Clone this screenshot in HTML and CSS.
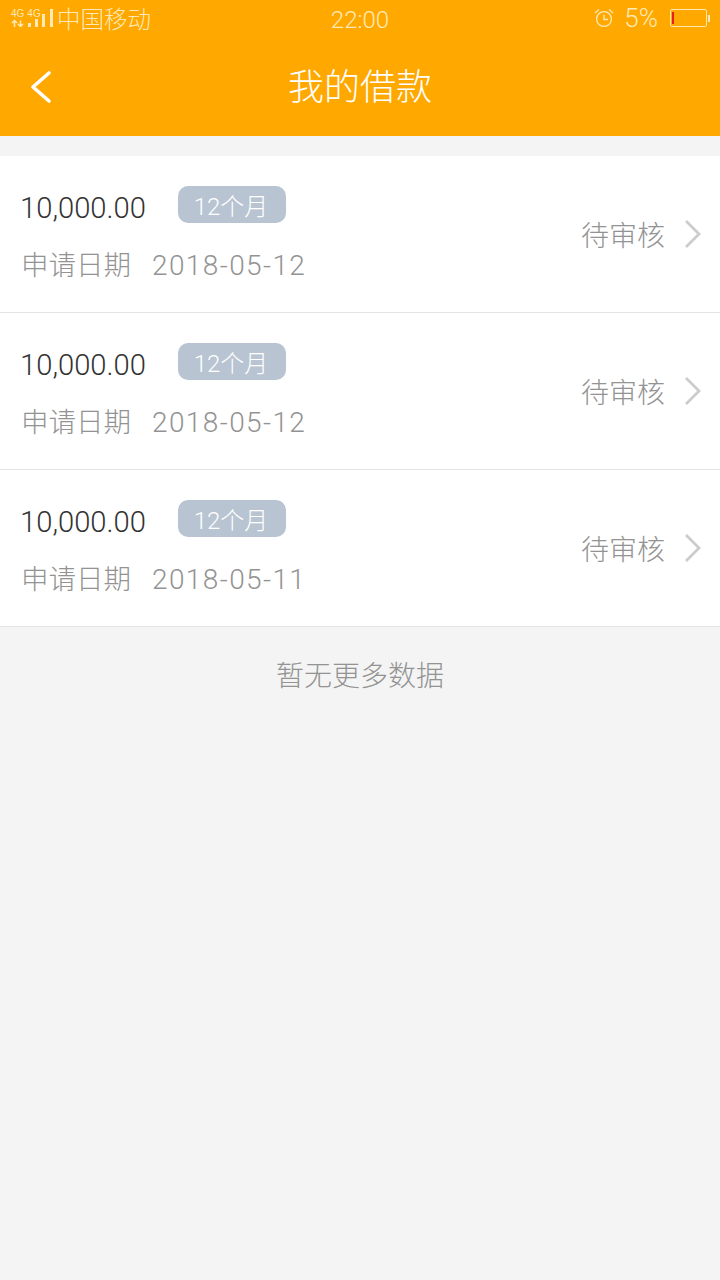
FILE: index.html
```html
<!DOCTYPE html>
<html lang="zh-CN">

<head>
    <meta charset="UTF-8">
    <meta name="viewport" content="width=device-width, initial-scale=1.0">
    <title>我的借款</title>
    <link rel="stylesheet" href="styles.css">
</head>

<body>
    <div class="top">
        <div class="status">
            <div class="status-left">
                <div class="net">
                    <div class="net-text"><span>4G</span><span>4G</span></div>
                    <svg class="signal" width="43" height="10" viewBox="0 0 43 10">
                        <path d="M3.500 10V4M1 6l2.500-2.500L6 6M9.500 3.500v6M7 7l2.500 2.500L12 7" fill="none" stroke="#ffe9b8" stroke-width="1.500"/>
                        <rect x="17" y="6" width="3" height="4" fill="#ffe9b8"/>
                        <rect x="24" y="2" width="3" height="8" fill="#ffe9b8"/>
                        <rect x="31" y="0" width="3" height="10" fill="#ffe9b8"/>
                        <rect x="39" y="0" width="3" height="10" fill="#ffe9b8"/>
                    </svg>
                    <svg class="signal-top" width="12" height="18" viewBox="0 0 12 18">
                        <rect x="1" y="5" width="3" height="13" fill="#ffe9b8"/>
                        <rect x="9" y="0" width="3" height="18" fill="#ffe9b8"/>
                    </svg>
                </div>
                <span class="carrier">中国移动</span>
            </div>
            <span class="clock">22:00</span>
            <div class="status-right">
                <svg class="alarm" width="20" height="20" viewBox="0 0 20 20">
                    <circle cx="10" cy="11" r="7.400" fill="none" stroke="#ffe9b8" stroke-width="1.300"/>
                    <path d="M10 6.500V11.500H14M1 5l4-3.500M19 5l-4-3.500" fill="none" stroke="#ffe9b8" stroke-width="1.300"/>
                </svg>
                <span class="percent">5%</span>
                <div class="battery">
                    <div class="battery-body"><div class="battery-level"></div></div>
                    <div class="battery-tip"></div>
                </div>
            </div>
        </div>
        <div class="title-bar">
            <svg class="back" width="24" height="34" viewBox="0 0 24 34">
                <path d="M20 3L4 17l16 14" fill="none" stroke="#fff" stroke-width="3.600" stroke-linecap="round" stroke-linejoin="round"/>
            </svg>
            <h1 class="title">我的借款</h1>
        </div>
    </div>

    <div class="list">
        <div class="row">
            <div class="info">
                <div class="line">
                    <span class="amount">10,000.00</span>
                    <span class="tag">12个月</span>
                </div>
                <div class="date"><span class="date-label">申请日期</span><span class="date-num">2018-05-12</span></div>
            </div>
            <div class="state">
                <span>待审核</span>
                <svg class="arrow" width="18" height="30" viewBox="0 0 18 30">
                    <path d="M2 2l13 13L2 28" fill="none" stroke="#cccccc" stroke-width="2.800"/>
                </svg>
            </div>
        </div>
        <div class="row">
            <div class="info">
                <div class="line">
                    <span class="amount">10,000.00</span>
                    <span class="tag">12个月</span>
                </div>
                <div class="date"><span class="date-label">申请日期</span><span class="date-num">2018-05-12</span></div>
            </div>
            <div class="state">
                <span>待审核</span>
                <svg class="arrow" width="18" height="30" viewBox="0 0 18 30">
                    <path d="M2 2l13 13L2 28" fill="none" stroke="#cccccc" stroke-width="2.800"/>
                </svg>
            </div>
        </div>
        <div class="row">
            <div class="info">
                <div class="line">
                    <span class="amount">10,000.00</span>
                    <span class="tag">12个月</span>
                </div>
                <div class="date"><span class="date-label">申请日期</span><span class="date-num">2018-05-11</span></div>
            </div>
            <div class="state">
                <span>待审核</span>
                <svg class="arrow" width="18" height="30" viewBox="0 0 18 30">
                    <path d="M2 2l13 13L2 28" fill="none" stroke="#cccccc" stroke-width="2.800"/>
                </svg>
            </div>
        </div>
    </div>
    <p class="no-more">暂无更多数据</p>
</body>

</html>
```

FILE: styles.css
```css
* {
    margin: 0;
    padding: 0;
    box-sizing: border-box;
}

body {
    width: 720px;
    height: 1280px;
    overflow: hidden;
    background-color: #f4f4f4;
    font-family: Roboto, "Noto Sans CJK SC", sans-serif;
    font-weight: 300;
}

.top {
    height: 136px;
    background-color: #ffa800;
}

.status {
    height: 40px;
    padding: 0 10px 0 11px;
    display: flex;
    justify-content: space-between;
    align-items: center;
    position: relative;
    color: #ffe9b8;
}

.status-left,
.status-right {
    display: flex;
    align-items: center;
}

.net {
    width: 43px;
    height: 18px;
    margin-bottom: 4px;
    position: relative;
}

.net-text {
    display: flex;
    gap: 3px;
    font-family: "Liberation Sans", sans-serif;
    font-size: 10px;
    font-weight: 400;
    line-height: 10px;
}

.signal {
    position: absolute;
    left: 0;
    top: 8px;
}

.signal-top {
    position: absolute;
    left: 30px;
    top: 0;
}

.carrier {
    margin-left: 3px;
    font-size: 23.500px;
    line-height: 30px;
}

.clock {
    position: absolute;
    left: 0;
    right: 0;
    text-align: center;
    font-size: 24px;
    line-height: 30px;
}

.status-right {
    gap: 10px;
}

.alarm {
    margin-bottom: 4px;
}

.percent {
    margin-bottom: 4px;
    font-size: 26px;
    line-height: 30px;
}

.battery {
    display: flex;
    align-items: center;
    margin-left: 2px;
    margin-bottom: 4px;
}

.battery-body {
    width: 37px;
    height: 18px;
    border: 1.500px solid #ffe9b8;
    border-radius: 2px;
    padding: 2px 0 2px 1px;
}

.battery-level {
    width: 2px;
    height: 100%;
    background-color: #e8201c;
}

.battery-tip {
    width: 2px;
    height: 7px;
    margin-left: 1px;
    background-color: #ffe9b8;
}

.title-bar {
    height: 96px;
    position: relative;
    display: flex;
    justify-content: center;
    align-items: center;
}

.back {
    position: absolute;
    left: 29px;
    top: 30px;
}

.title {
    color: #fff;
    font-size: 36px;
    font-weight: 300;
    line-height: 50px;
}

.list {
    margin-top: 20px;
    background-color: #fff;
}

.row {
    height: 157px;
    padding: 0 18px 0 20px;
    display: flex;
    justify-content: space-between;
    align-items: center;
    border-bottom: 1px solid #e4e4e4;
}

.info {
    height: 97px;
}

.line {
    display: flex;
    align-items: flex-start;
    height: 37px;
}

.amount {
    width: 158px;
    color: #333;
    font-size: 29.200px;
    line-height: 45px;
}

.tag {
    width: 108px;
    height: 37px;
    padding-right: 2px;
    border-radius: 10px;
    background-color: #b8c4d2;
    color: #fff;
    font-size: 24px;
    line-height: 43px;
    text-align: center;
}

.date {
    margin-top: 20px;
    padding-left: 1px;
    color: #939393;
    font-size: 27.500px;
    line-height: 46px;
}

.date-label {
    margin-right: 21px;
}

.date-num {
    font-size: 28px;
    letter-spacing: 1.400px;
}

.state {
    display: flex;
    align-items: center;
    color: #939393;
    font-size: 28px;
}

.arrow {
    margin-left: 19px;
}

.no-more {
    margin-top: 30px;
    text-align: center;
    color: #939393;
    font-size: 28px;
    line-height: 40px;
}
```
